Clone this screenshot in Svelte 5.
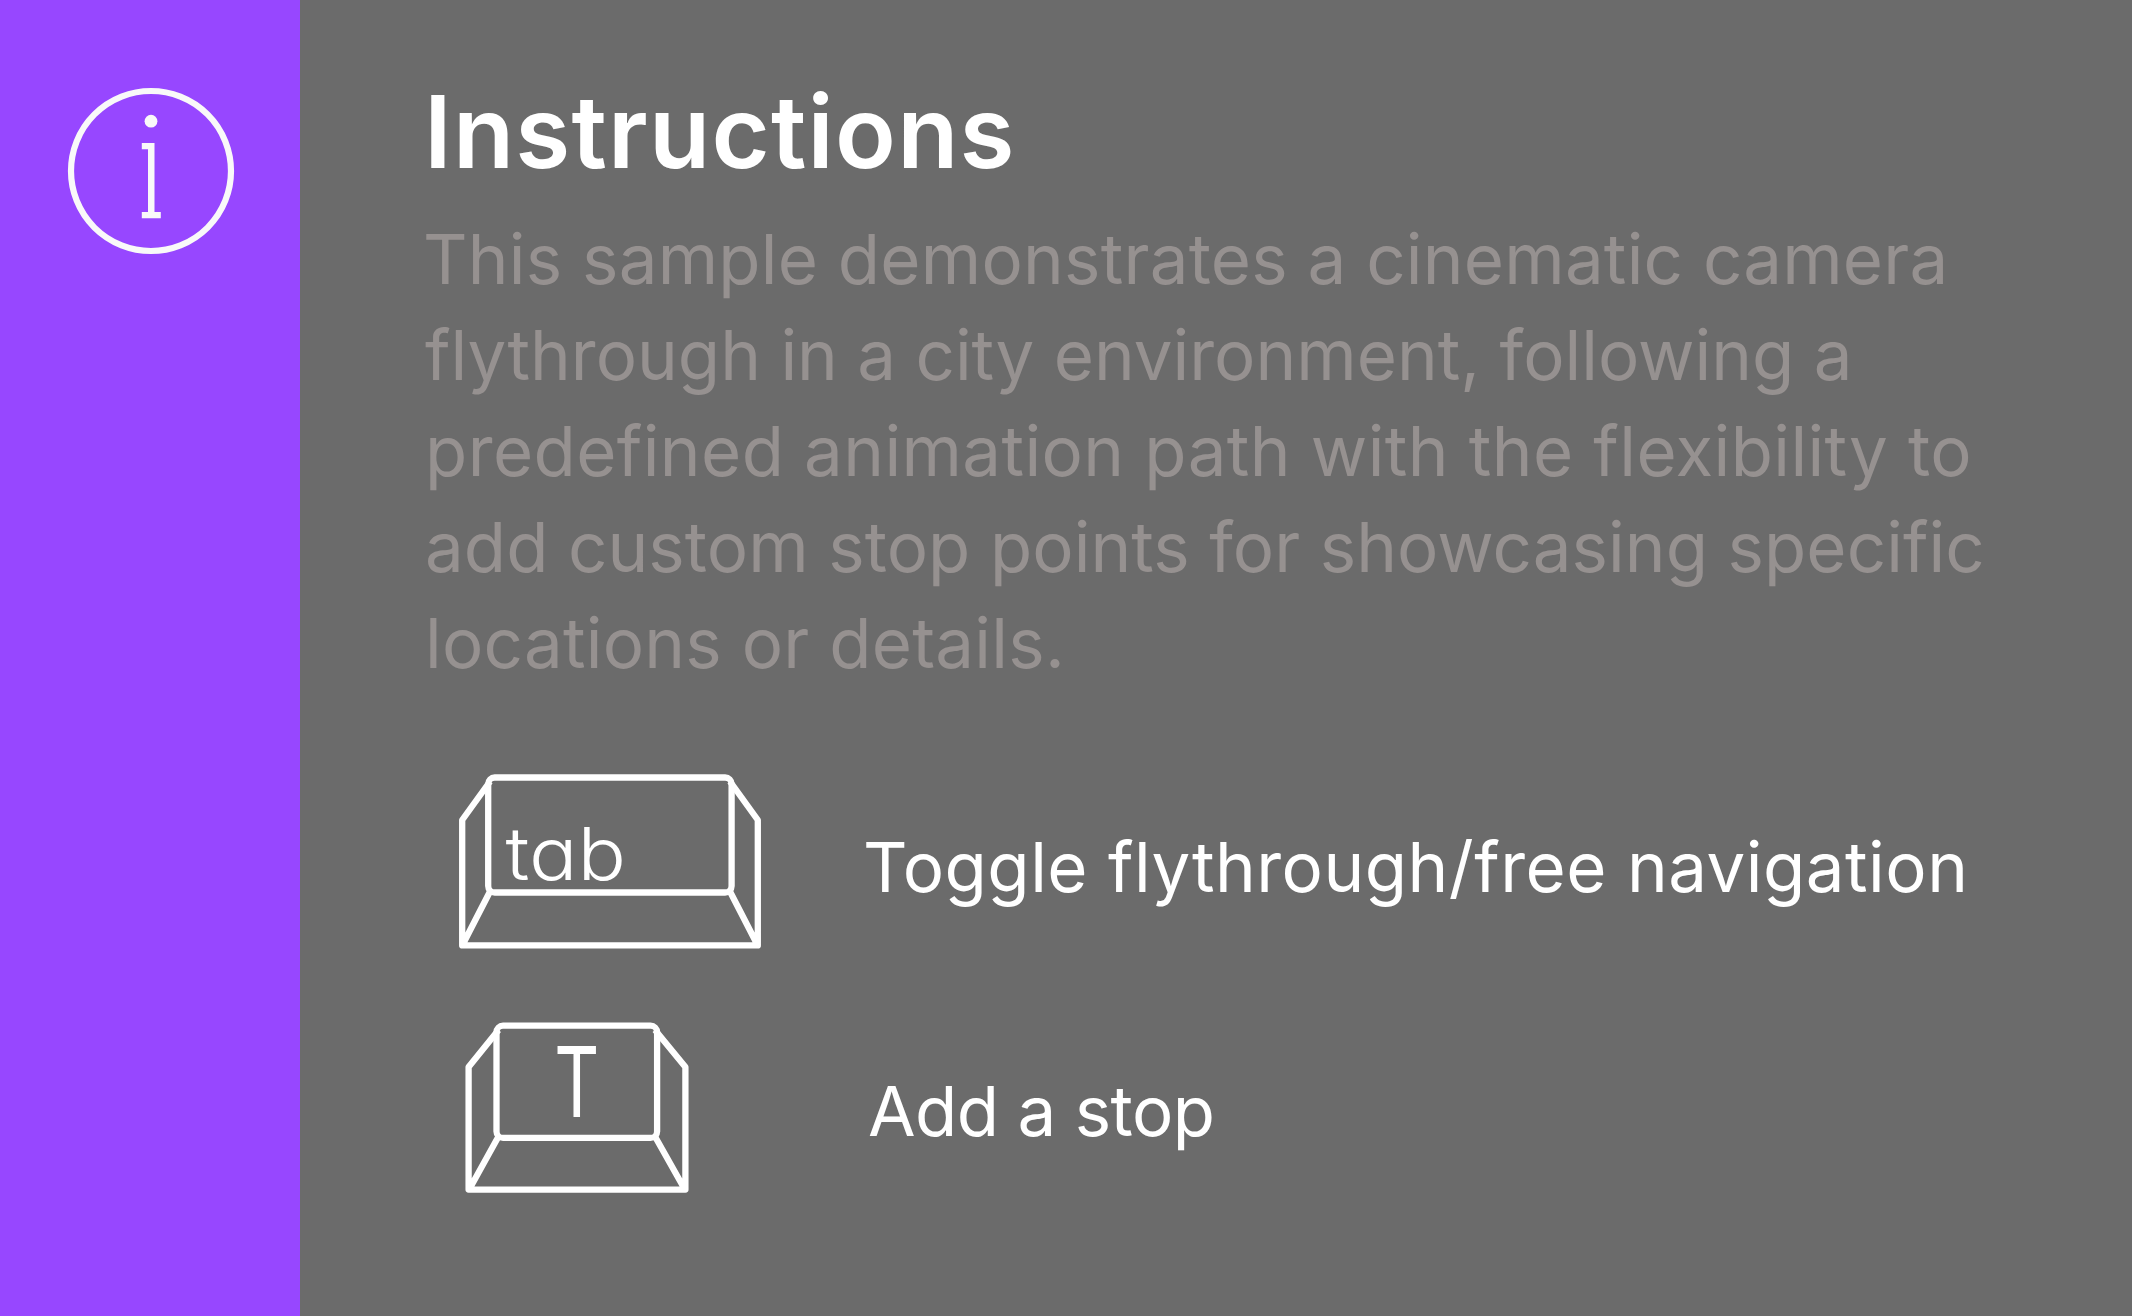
<script>
  const intro = [
    { text: 'This sample demonstrates a cinematic camera', tracking: 0.23 },
    { text: 'flythrough in a city environment, following a', tracking: 0.01 },
    { text: 'predefined animation path with the flexibility to', tracking: 0.4 },
    { text: 'add custom stop points for showcasing specific', tracking: 0.07 },
    { text: 'locations or details.', tracking: 0.25 }
  ];
</script>

<div class="panel">
  <aside class="rail">
    <svg class="info" viewBox="0 0 168 168" role="img" aria-label="Information">
      <circle class="ring" cx="84" cy="84" r="80" />
      <circle class="solid" cx="84" cy="34.2" r="6.4" />
      <path class="solid" d="M74.8 56h12.7v69h6.3v6.2h-19V125h6.2V62.2h-6.2z" />
    </svg>
  </aside>

  <main class="content">
    <h1>Instructions</h1>
    <p class="intro">
      {#each intro as line}
        <span class="line" style="letter-spacing: {line.tracking}px">{line.text}</span>
      {/each}
    </p>

    <ul class="keys">
      <li class="row wide">
        <svg class="keycap" viewBox="0 0 340 220">
          <rect x="48.2" y="27.5" width="243.4" height="115" rx="6.5" />
          <path d="M50 31.5 22.2 70v125.4H317.8V70L290 31.5M50 141.5 23 194M290 141.5 317 194" />
          <text class="legend tab" x="65.5" y="130" textLength="120.5" lengthAdjust="spacingAndGlyphs">tab</text>
        </svg>
        <span class="label toggle">Toggle flythrough/free navigation</span>
      </li>
      <li class="row small">
        <svg class="keycap" viewBox="0 0 340 220">
          <rect x="56.5" y="25.7" width="160.6" height="112.2" rx="6.5" />
          <path d="M58.5 30 28.6 67v122.6H245.4V67L215 30M58.5 136.5 30 188M215 136.5 244 188" />
          <text class="legend letter" x="114.3" y="117" textLength="45" lengthAdjust="spacingAndGlyphs">T</text>
        </svg>
        <span class="label stop">Add a stop</span>
      </li>
    </ul>
  </main>
</div>

<style>
  :global(body) {
    margin: 0;
    background: #6b6b6b;
  }

  .panel {
    display: flex;
    width: 100%;
    height: 100vh;
    overflow: hidden;
    background: #6b6b6b;
    font-family: Inter, 'Liberation Sans', sans-serif;
    color: #fff;
  }

  .rail {
    box-sizing: border-box;
    flex: 0 0 300px;
    padding: 87px 0 0 67px;
    background: #9747ff;
  }

  .info {
    display: block;
    width: 168px;
    height: 168px;
  }

  .ring {
    fill: none;
    stroke: #f9f9f9;
    stroke-width: 6.2;
  }

  .solid {
    fill: #f9f9f9;
  }

  .content {
    box-sizing: border-box;
    flex: 1;
    padding: 72px 0 0 125px;
  }

  h1 {
    margin: 0 0 19px -1px;
    font-size: 100px;
    font-weight: 600;
    line-height: 120px;
    letter-spacing: 1.25px;
  }

  .intro {
    margin: 0;
    color: #969190;
    font-size: 69px;
    font-weight: 400;
    line-height: 96px;
  }

  .line {
    display: block;
    white-space: nowrap;
  }

  .line:first-child {
    margin-left: -2px;
  }

  .keys {
    margin: 59px 0 0 15px;
    padding: 0;
    list-style: none;
  }

  .row {
    display: flex;
    align-items: center;
  }

  .wide {
    gap: 83px;
    margin-bottom: 30px;
  }

  .small {
    gap: 88px;
  }

  .keycap {
    flex: none;
    width: 340px;
    height: 220px;
    fill: none;
    stroke: #fff;
    stroke-width: 6.3;
    stroke-linejoin: round;
  }

  .legend {
    fill: #fff;
    stroke: none;
  }

  .tab {
    font-size: 73px;
    font-weight: 300;
    font-feature-settings: 'cv11';
  }

  .letter {
    font-size: 97.7px;
    font-weight: 400;
  }

  .label {
    font-size: 69px;
    font-weight: 400;
    line-height: 96px;
    white-space: nowrap;
  }

  .toggle {
    padding-top: 14px;
    letter-spacing: 0.5px;
  }

  .stop {
    padding-top: 2px;
    letter-spacing: -0.5px;
  }
</style>
